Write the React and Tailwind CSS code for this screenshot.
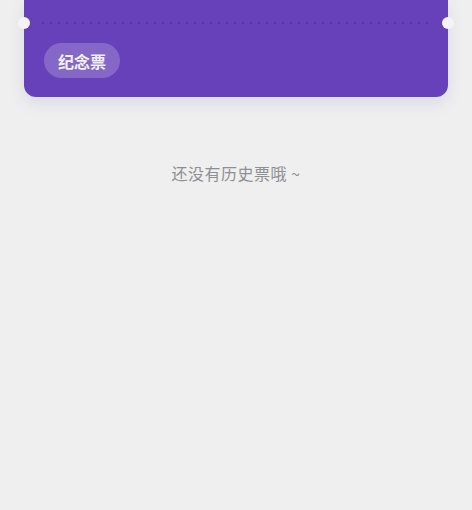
import React from 'react';

const cjk = { fontFamily: '"Noto Sans CJK SC", "Noto Sans", sans-serif' };

export default function App() {
  return (
    <div className="min-h-[510px] w-full bg-[#efeff0]" style={cjk}>
      <div className="px-6">
        <div className="relative h-[97px] rounded-b-[12px] bg-[#6741b9] shadow-[0_6px_16px_rgba(80,60,140,0.12)]">
          {/* ticket notches */}
          <div className="absolute -left-[6px] top-[17px] h-3 w-3 rounded-full bg-[#f4f4f6]" />
          <div className="absolute -right-[6px] top-[17px] h-3 w-3 rounded-full bg-[#f4f4f6]" />
          <div className="h-[22px]" />
          <div className="mx-[18px] h-[2px] bg-[linear-gradient(to_right,#5535a3_2px,transparent_2px)] bg-[length:8px_2px]" />
          <div className="px-5 pt-[19px]">
            <span className="inline-flex h-[35px] items-center rounded-full bg-white/20 px-[14px] text-[16px] font-bold text-white/90">
              纪念票
            </span>
          </div>
        </div>
      </div>
      <p className="mt-[64px] text-center text-[16px] tracking-[0.5px] text-[#8e8e93]">还没有历史票哦 ~</p>
    </div>
  );
}
